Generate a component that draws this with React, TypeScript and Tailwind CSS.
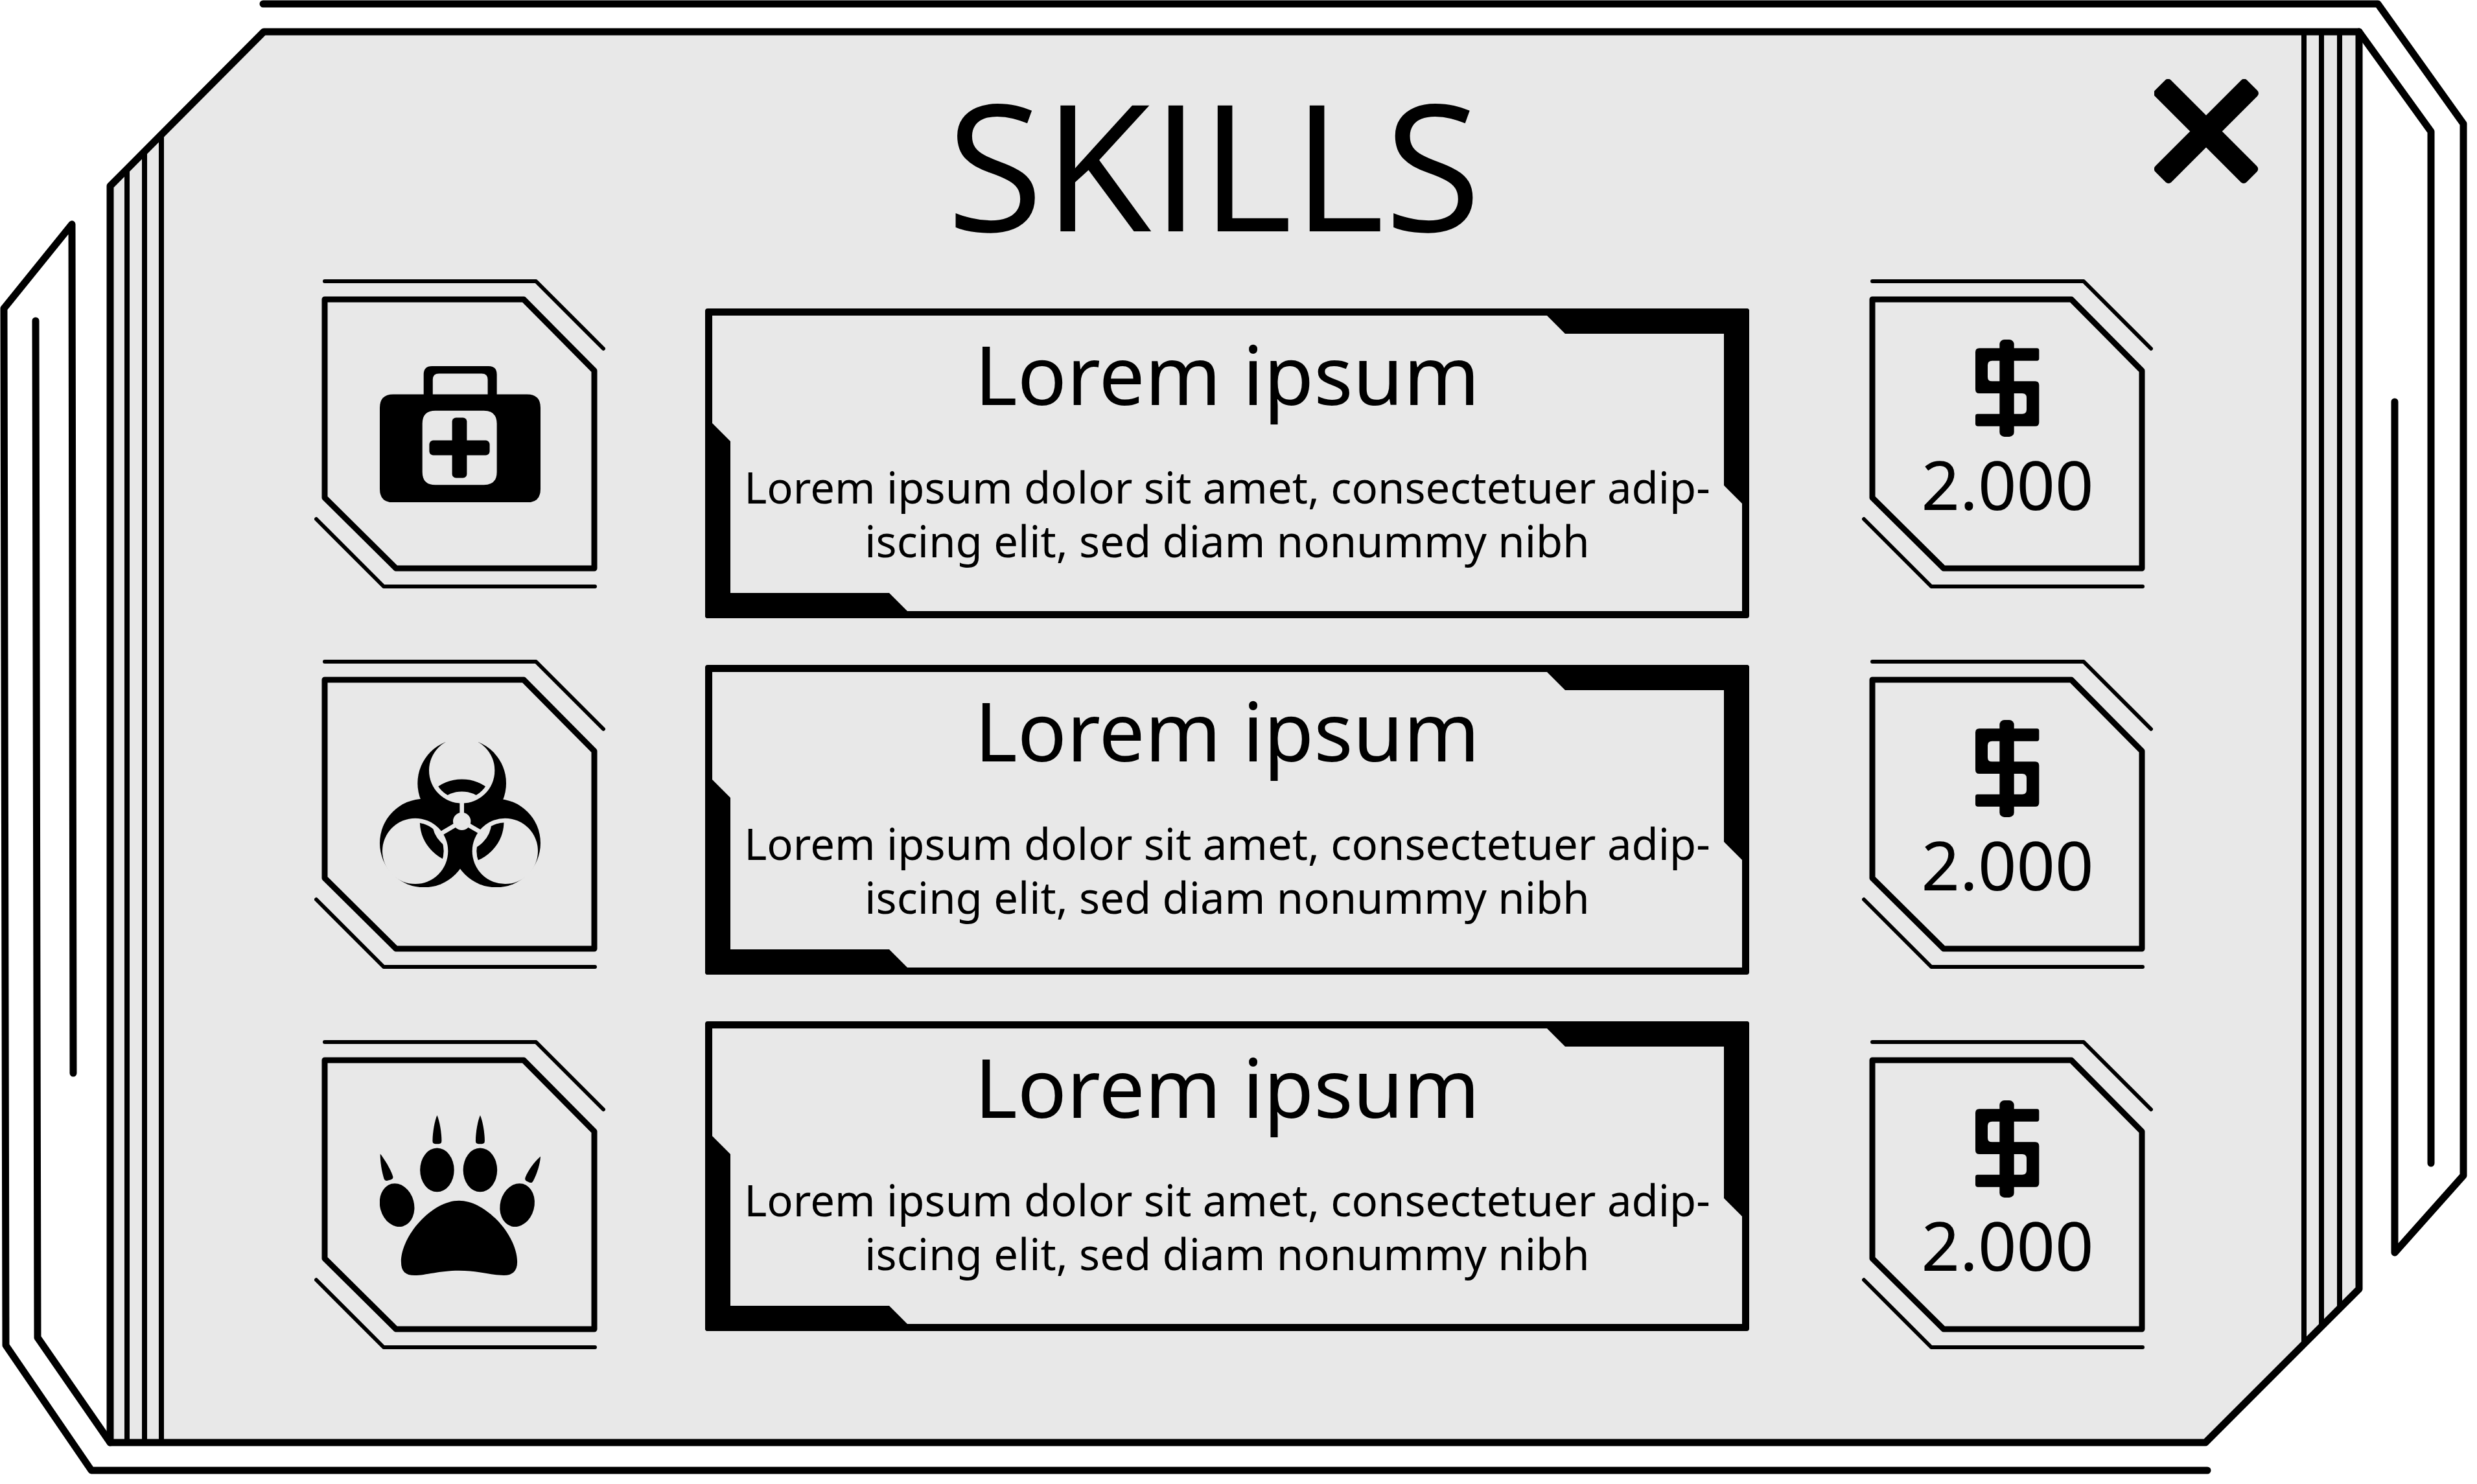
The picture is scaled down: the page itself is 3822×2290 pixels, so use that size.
import type { ReactNode } from 'react';

function PanelFrame() {
  return (
    <svg
      aria-hidden="true"
      className="absolute inset-0 h-full w-full"
      viewBox="0 0 3822 2290"
      preserveAspectRatio="none"
      fill="none"
      stroke="#000"
      strokeWidth="11"
      strokeLinecap="round"
      strokeLinejoin="round"
    >
      <path d="M407 49H3640V1989L3403 2226H170V287Z" fill="#e8e8e8" />
      <path
        d="M196 262V2226M223 235V2226M249 209V2226M3555 49V2073M3582 49V2046M3610 49V2018"
        strokeWidth="8"
        strokeLinecap="butt"
      />
      <path d="M406 6H3669L3801 191V1814L3695 1933V620" />
      <path d="M3640 49L3751 203V1795" />
      <path d="M3406 2269H141L9 2076L6 476L111 346L113 1656" />
      <path d="M55 495L58 2064L170 2226" />
    </svg>
  );
}

function Tile({ children }: { children: ReactNode }) {
  return (
    <li className="relative h-[478px]">
      <svg
        aria-hidden="true"
        className="absolute inset-0 h-full w-full"
        viewBox="0 0 449 478"
        fill="none"
        stroke="#000"
        strokeLinecap="round"
        strokeLinejoin="round"
      >
        <path d="M16 3H342L446 107M3 370L107 474H433" strokeWidth="6" />
        <path d="M16 31H323L432 141V446H126L16 337Z" strokeWidth="9" />
      </svg>
      {children}
    </li>
  );
}

function MedkitIcon() {
  return (
    <svg className="w-[248px]" viewBox="139 75 740 628" role="img" aria-label="First aid">
      <path
        fillRule="evenodd"
        d="M341 205V113Q341 75 379 75H640Q678 75 678 113V205H817Q879 205 879 267V641Q879 703 817 703H201Q139 703 139 641V267Q139 205 201 205ZM383 205H636V137Q636 109 608 109H411Q383 109 383 137ZM395 280Q335 280 335 340V562Q335 622 395 622H618Q678 622 678 562V340Q678 280 618 280Z"
      />
      <rect x="472" y="312" width="68" height="278" rx="18" />
      <rect x="367" y="417" width="278" height="68" rx="18" />
    </svg>
  );
}

function BiohazardIcon() {
  return (
    <svg className="w-[248px]" viewBox="137 134 744 673" role="img" aria-label="Biohazard">
      <defs>
        <mask id="lobe-cuts" maskUnits="userSpaceOnUse" x="100" y="100" width="820" height="740">
          <rect x="100" y="100" width="820" height="740" fill="#fff" />
          <circle cx="517" cy="266" r="152" />
          <circle cx="301" cy="639" r="152" />
          <circle cx="717" cy="639" r="152" />
          <circle cx="517" cy="501" r="41" />
          <path d="M517 501V400M517 501L425 555M517 501L600 549" stroke="#000" strokeWidth="20" />
        </mask>
        <clipPath id="ring-arcs">
          <circle cx="517" cy="266" r="132" />
          <circle cx="301" cy="639" r="132" />
          <circle cx="717" cy="639" r="132" />
        </clipPath>
      </defs>
      <g mask="url(#lobe-cuts)">
        <circle cx="517" cy="325" r="205" />
        <circle cx="342" cy="602" r="205" />
        <circle cx="676" cy="602" r="205" />
      </g>
      <circle
        cx="517"
        cy="501"
        r="166"
        fill="none"
        stroke="#000"
        strokeWidth="57"
        clipPath="url(#ring-arcs)"
      />
    </svg>
  );
}

function PawIcon() {
  const claw =
    'M402 91C413 115 423 170 423 210Q423 224 410 224H394Q381 224 381 210C381 170 391 115 402 91Z';
  return (
    <svg className="w-[248px]" viewBox="136 91 746 743" role="img" aria-label="Paw">
      <path d={claw} />
      <path d={claw} transform="translate(200 0)" />
      <path d="M138 270C156 292 186 340 197 375Q200 385 187 390L172 394Q160 397 155 384C145 350 138 310 138 270Z" />
      <path d="M882 282C881 315 865 365 848 396Q842 407 831 403L818 397Q807 391 812 378C825 345 860 300 882 282Z" />
      <ellipse cx="402" cy="345" rx="79" ry="102" />
      <ellipse cx="602" cy="345" rx="79" ry="102" />
      <ellipse cx="216" cy="508" rx="79" ry="102" transform="rotate(-15 216 508)" />
      <ellipse cx="774" cy="508" rx="79" ry="102" transform="rotate(15 774 508)" />
      <path d="M504 487C630 487 774 650 774 772C774 815 750 834 712 834C650 834 600 812 504 812C410 812 350 834 298 834C255 834 235 815 235 772C235 650 378 487 504 487Z" />
    </svg>
  );
}

function DollarIcon() {
  return (
    <svg className="h-[150px]" viewBox="564 312 295 450" role="img" aria-label="Dollars">
      <rect x="676" y="312" width="67" height="450" rx="22" />
      <path d="M582 352H849Q859 352 859 362V400Q859 410 849 410H641Q621 410 621 430V485Q621 505 641 505H841Q859 505 859 523V695Q859 713 841 713H574Q564 713 564 703V666Q564 656 574 656H781Q801 656 801 636V581Q801 561 781 561H582Q564 561 564 543V370Q564 352 582 352Z" />
    </svg>
  );
}

function CardCorner({ className }: { className: string }) {
  return (
    <svg aria-hidden="true" className={className} viewBox="0 0 312 301">
      <path d="M0 11V0H308Q312 0 312 4V301H301L273 273V39H28Z" />
    </svg>
  );
}

function SkillCard({ title, lines }: { title: string; lines: string[] }) {
  return (
    <li className="relative h-[478px] rounded-[4px] border-[11px] border-black pt-[26px] text-center">
      <CardCorner className="absolute -top-[11px] -right-[11px] w-[312px]" />
      <CardCorner className="absolute -bottom-[11px] -left-[11px] w-[312px] rotate-180" />
      <h2 className="text-[126px] leading-none">{title}</h2>
      <p className="relative mt-[71px] text-[67px] leading-[83px] whitespace-nowrap">
        {lines[0]}
        <br />
        {lines[1]}
      </p>
    </li>
  );
}

const skills = [
  { id: 'medkit', icon: <MedkitIcon /> },
  { id: 'biohazard', icon: <BiohazardIcon /> },
  { id: 'paw', icon: <PawIcon /> },
].map((skill) => ({
  ...skill,
  title: 'Lorem ipsum',
  lines: [
    'Lorem ipsum dolor sit amet, consectetuer adip-',
    'iscing elit, sed diam nonummy nibh',
  ],
  price: '2.000',
}));

export default function App() {
  return (
    <main className="relative min-h-screen bg-white pb-[207px] font-['Noto_Sans','Open_Sans',sans-serif] text-black">
      <PanelFrame />
      <div className="relative">
        <header className="flex items-start pt-[116px] pr-[337px] pl-[422px]">
          <h1 className="flex-1 text-center font-['Open_Sans','Noto_Sans',sans-serif] text-[272px] leading-none">
            SKILLS
          </h1>
          <button type="button" aria-label="Close" className="mt-1.5 w-[161px]">
            <svg aria-hidden="true" className="w-full" viewBox="-80 -80 161 161">
              <rect x="-100" y="-17" width="200" height="35" rx="6" transform="rotate(45)" />
              <rect x="-100" y="-17" width="200" height="35" rx="6" transform="rotate(-45)" />
            </svg>
          </button>
        </header>

        <div className="mt-[43px] flex items-start pr-[500px] pl-[485px]">
          <ul className="flex w-[449px] flex-col gap-[109px]">
            {skills.map((skill) => (
              <Tile key={skill.id}>
                <div className="flex h-full items-center justify-center">{skill.icon}</div>
              </Tile>
            ))}
          </ul>

          <ul className="mt-[45px] mr-[174px] ml-[154px] flex flex-1 flex-col gap-[72px]">
            {skills.map((skill) => (
              <SkillCard key={skill.id} title={skill.title} lines={skill.lines} />
            ))}
          </ul>

          <ul className="flex w-[449px] flex-col gap-[109px]">
            {skills.map((skill) => (
              <Tile key={skill.id}>
                <div className="flex h-full flex-col items-center pt-[93px]">
                  <DollarIcon />
                  <span className="mt-[21px] text-[104px] leading-none">{skill.price}</span>
                </div>
              </Tile>
            ))}
          </ul>
        </div>
      </div>
    </main>
  );
}
